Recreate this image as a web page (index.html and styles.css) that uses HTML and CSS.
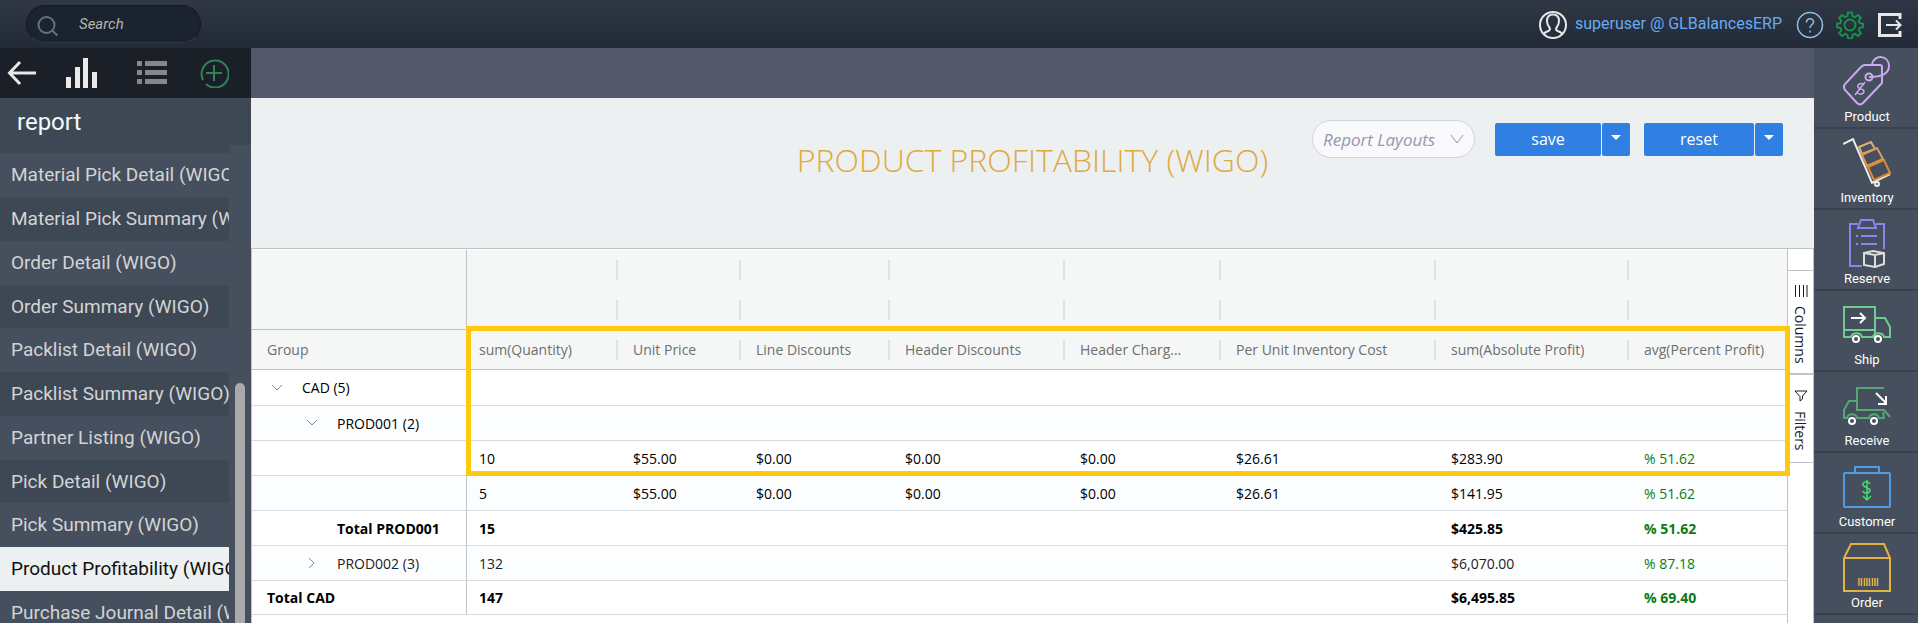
FILE: index.html
```
<!DOCTYPE html>
<html lang="en">
<head>
<meta charset="utf-8">
<title>Product Profitability (WIGO)</title>
<link rel="stylesheet" href="styles.css">
</head>
<body>
<div class="app">
  <header class="topbar">
    <label class="search">
      <svg class="search-icon" viewBox="0 0 22 22" width="22" height="22"><circle cx="9.500" cy="10" r="8"/><path d="M14.500 15l6 5.500"/></svg>
      <input type="text" placeholder="Search" aria-label="Search">
    </label>
    <div class="account">
      <svg class="ic avatar" viewBox="0 0 28 28" width="28" height="28"><circle cx="14" cy="14" r="13"/><path d="M5 23c1-3 6-2 6-5 0-2-3-3-3-8 0-4 2-6.500 6-6.500s6 2.500 6 6.500c0 5-3 6-3 8 0 3 5 2 6 5"/></svg>
      <a href="#">superuser @ GLBalancesERP</a>
      <button class="icon-btn" aria-label="Help"><svg class="ic help" viewBox="0 0 28 28" width="28" height="28"><circle cx="14" cy="14" r="12.500"/><path d="M10.500 11.500c0-5 7-5 7-.5 0 3-3.500 2.500-3.500 6M14 19.500v2"/></svg></button>
      <button class="icon-btn" aria-label="Settings"><svg class="ic gear" viewBox="0 0 28 28" width="28" height="28"><circle cx="14" cy="14" r="5.500"/><path d="M12 1.500h4l.6 3.600 2.400 1 3-2.100 2.800 2.800-2.100 3 1 2.400 3.300.6v3.400l-3.300.6-1 2.400 2.100 3-2.800 2.800-3-2.100-2.400 1-.6 3.600h-4l-.6-3.600-2.400-1-3 2.100-2.800-2.800 2.100-3-1-2.400-3.300-.6v-3.400l3.300-.6 1-2.400-2.100-3 2.800-2.800 3 2.100 2.400-1z"/></svg></button>
      <button class="icon-btn" aria-label="Log out"><svg class="ic logout" viewBox="0 0 28 28" width="28" height="28"><path d="M24 8V3.500H3.500v21H24V20"/><path class="arrow" d="M10 14h15M20 9.500l4.500 4.500-4.500 4.500"/></svg></button>
    </div>
  </header>

  <div class="body">
    <aside class="side">
      <div class="side-tools">
        <button class="icon-btn" aria-label="Back"><svg class="ic white3" viewBox="0 0 30 30" width="30" height="30"><path d="M29 15H3M13 4L2.500 15 13 26"/></svg></button>
        <button class="icon-btn" aria-label="Reports"><svg class="bars" viewBox="0 0 32 30" width="32" height="30"><path d="M0 19h5v11H0zM9 9h5v21H9zM17 0h5v30h-5zM26 14h5v16h-5z"/></svg></button>
        <button class="icon-btn" aria-label="List"><svg class="lines" viewBox="0 0 30 24" width="30" height="24"><path d="M0 0h5v5H0zM8 0h22v5H8zM0 9h5v5H0zM8 9h22v5H8zM0 18h5v5H0zM8 18h22v5H8z"/></svg></button>
        <button class="icon-btn" aria-label="Add"><svg class="ic plus" viewBox="0 0 30 30" width="30" height="30"><path d="M4 22A13.500 13.500 0 1 1 7 26"/><path d="M15 7v16M7 15h16"/></svg></button>
      </div>
      <h2>report</h2>
      <nav class="list-wrap">
        <ul class="list">
          <li><a href="#">Material Pick Detail (WIGO)</a></li>
          <li><a href="#">Material Pick Summary (WIGO)</a></li>
          <li><a href="#">Order Detail (WIGO)</a></li>
          <li><a href="#">Order Summary (WIGO)</a></li>
          <li><a href="#">Packlist Detail (WIGO)</a></li>
          <li><a href="#">Packlist Summary (WIGO)</a></li>
          <li><a href="#">Partner Listing (WIGO)</a></li>
          <li><a href="#">Pick Detail (WIGO)</a></li>
          <li><a href="#">Pick Summary (WIGO)</a></li>
          <li><a href="#" class="active">Product Profitability (WIGO)</a></li>
          <li><a href="#">Purchase Journal Detail (WIGO)</a></li>
        </ul>
        <div class="scroll"><div class="thumb"></div></div>
      </nav>
    </aside>

    <main class="main">
      <div class="strip"></div>
      <div class="head">
        <h1>PRODUCT PROFITABILITY (WIGO)</h1>
        <div class="actions">
          <div class="select-wrap">
            <select aria-label="Report Layouts"><option>Report Layouts</option></select>
            <svg class="chev" viewBox="0 0 14 10" width="14" height="10"><path d="M1 1l6 8 6-8"/></svg>
          </div>
          <div class="split save"><button>save</button><button class="drop" aria-label="More save options"><span class="caret"></span></button></div>
          <div class="split reset"><button>reset</button><button class="drop" aria-label="More reset options"><span class="caret"></span></button></div>
        </div>
      </div>
      <div class="grid">
        <div class="table-wrap">
          <table>
            <colgroup><col class="c0"><col class="c1"><col class="c2"><col class="c3"><col class="c4"><col class="c5"><col class="c6"><col class="c7"><col class="c8"></colgroup>
            <thead>
              <tr><td></td><td></td><td></td><td></td><td></td><td></td><td></td><td></td><td></td></tr>
              <tr class="line"><td></td><td></td><td></td><td></td><td></td><td></td><td></td><td></td><td></td></tr>
              <tr class="line"><th>Group</th><th>sum(Quantity)</th><th>Unit Price</th><th>Line Discounts</th><th>Header Discounts</th><th>Header Charg...</th><th>Per Unit Inventory Cost</th><th>sum(Absolute Profit)</th><th>avg(Percent Profit)</th></tr>
            </thead>
            <tbody>
              <tr><td><div class="group"><svg class="tog" viewBox="0 0 12 12" width="12" height="12"><path d="M1 3l5 5 5-5"/></svg>CAD (5)</div></td><td></td><td></td><td></td><td></td><td></td><td></td><td></td><td></td></tr>
              <tr><td><div class="group deep"><svg class="tog" viewBox="0 0 12 12" width="12" height="12"><path d="M1 3l5 5 5-5"/></svg>PROD001 (2)</div></td><td></td><td></td><td></td><td></td><td></td><td></td><td></td><td></td></tr>
              <tr><td></td><td>10</td><td>$55.00</td><td>$0.00</td><td>$0.00</td><td>$0.00</td><td>$26.61</td><td>$283.90</td><td>% 51.62</td></tr>
              <tr><td></td><td>5</td><td>$55.00</td><td>$0.00</td><td>$0.00</td><td>$0.00</td><td>$26.61</td><td>$141.95</td><td>% 51.62</td></tr>
              <tr class="total"><td><div class="leaf">Total PROD001</div></td><td>15</td><td></td><td></td><td></td><td></td><td></td><td>$425.85</td><td>% 51.62</td></tr>
              <tr class="soft"><td><div class="group deep"><svg class="tog" viewBox="0 0 12 12" width="12" height="12"><path d="M3 1l5 5-5 5"/></svg>PROD002 (3)</div></td><td>132</td><td></td><td></td><td></td><td></td><td></td><td>$6,070.00</td><td>% 87.18</td></tr>
              <tr class="total"><td>Total CAD</td><td>147</td><td></td><td></td><td></td><td></td><td></td><td>$6,495.85</td><td>% 69.40</td></tr>
            </tbody>
          </table>
          <div class="highlight"></div>
        </div>
        <div class="tabs">
          <button class="tab columns"><svg viewBox="0 0 14 12" width="14" height="12"><path d="M1.500 0v12M5.500 0v12M9.500 0v12M13 0v12"/></svg>Columns</button>
          <button class="tab filters"><svg viewBox="0 0 14 12" width="14" height="12"><path d="M1 1h12L8.500 6v3L6 11V6.500z"/></svg>Filters</button>
        </div>
      </div>
    </main>

    <nav class="dock">
      <a href="#"><svg viewBox="0 0 48 50" width="48" height="50" stroke="#cda9f2"><path d="M22 9h15q2 0 2 2v16L20 47q-3 3-6 0L2 34q-2-3 0-6L18 11q2-2 4-2z"/><circle cx="26" cy="21" r="3.500"/><path d="M26 21c12 0 20-3 20-11 0-11-15-12-17-2"/><path stroke-width="1.500" d="M21 29c-2-3-7-1-6 2 1 3 5 1 6 4 0 3-5 5-7 1M22 26L12 39"/></svg>Product</a>
      <a href="#"><svg viewBox="0 0 48 50" width="48" height="50" stroke="#d98b38"><path stroke="#eee" d="M0 7l10-5 19 44 18-9"/><circle stroke="#eee" cx="34" cy="47" r="2"/><path stroke="#e2ad78" d="M16 10l12-5 4 7-13 5z"/><path stroke="#dc9a56" d="M19 18l15-7 6 11-16 7z"/><path d="M25 30l16-7 6 13-16 7z"/></svg>Inventory</a>
      <a href="#"><svg viewBox="0 0 48 50" width="48" height="50" stroke="#8b84ee"><path d="M15 6H7v42h12M33 6h8v25M18 2h12l3 8H15zM13 18h2M18 18h16M13 26h2M18 26h16"/><path stroke="#ddd" d="M21 35l9-2 11 2v11l-9 3-11-2zM21 35l11 2 9-2M32 37v12"/></svg>Reserve</a>
      <a href="#"><svg viewBox="0 0 48 50" width="48" height="50" stroke="#6fcb90"><path d="M9 38H1V8h31v30H18M1 31h31M32 19h10l5 9v10h-7M30 38c1-5 10-5 11 0M8 38c1-5 10-5 11 0"/><g stroke="#fff" stroke-width="2"><circle cx="13" cy="40" r="3"/><circle cx="35" cy="40" r="3"/><path d="M8 19h14M17 14l5 5-5 5"/></g></svg>Ship</a>
      <a href="#"><svg viewBox="0 0 48 50" width="48" height="50" stroke="#55a873"><path d="M41 8H14v22h27l6 7M14 21H6l-5 9v8h4M4 38c1-5 9-5 10 0h12c1-5 9-5 10 0h5l-1-6"/><g stroke="#fff" stroke-width="2"><circle cx="9" cy="41" r="3"/><circle cx="31" cy="41" r="3"/><path d="M33 13l10 10M43 16v8h-8"/></g></svg>Receive</a>
      <a href="#"><svg viewBox="0 0 48 50" width="48" height="50" stroke="#4f9ce6"><rect x="1" y="12" width="46" height="34" rx="1"/><path d="M12 12V6h24v6"/><path stroke="#3fe26d" stroke-width="1.500" d="M27 23c-2-4-8-2-7 1 1 3 6 2 7 5 0 4-6 4-7 1M24 19v20M20 35l4 4 4-4"/></svg>Customer</a>
      <a href="#"><svg viewBox="0 0 48 50" width="48" height="50" stroke="#e3b245"><path d="M1 16v33h46V16L41 2H8zM1 16h46"/><path stroke-width="1.500" d="M16 36v8M18.500 36v8M21.500 36v8M24 36v8M26.500 36v8M29.500 36v8M32 36v8M34.500 36v8"/></svg>Order</a>
      <a href="#" aria-label="More"></a>
    </nav>
  </div>
</div>
</body>
</html>
```
FILE: styles.css
```
* { box-sizing: border-box; }
body { margin: 0; font-family: "Open Sans", "Noto Sans", sans-serif; font-size: 14px; color: #000; }
button { border: 0; padding: 0; background: none; font: inherit; color: inherit; }
a { text-decoration: none; color: inherit; }
svg { display: block; flex: none; fill: none; }

.app { height: 100vh; display: flex; flex-direction: column; overflow: hidden; }

.topbar { height: 48px; flex: none; display: flex; align-items: center; justify-content: space-between; padding: 0 14px 0 26px; background: linear-gradient(#303745, #232a37); font-family: Roboto, sans-serif; }
.search { display: flex; align-items: center; gap: 20px; width: 175px; height: 38px; padding: 4px 10px 0; border: 1px solid #151b26; border-bottom-color: #2f3744; border-radius: 19px; background: #1c2330; }
.search-icon { stroke: #5f7386; stroke-width: 2; }
.search input { min-width: 0; width: 100%; border: 0; outline: 0; background: none; padding: 0 0 4px; font: italic 15px Roboto, sans-serif; color: #b5b3ae; }
.search input::placeholder { color: #b5b3ae; opacity: 1; }
.account { display: flex; align-items: center; gap: 12px; padding-top: 2px; color: #69aaf5; font-size: 16px; }
.account a { margin: 0 2px 0 -4px; padding-bottom: 4px; }
.ic { stroke-width: 2; stroke: #e8e8e8; }
.help { stroke: #8dbfe6; stroke-width: 1.5; }
.gear { stroke: #15934a; }
.logout { stroke-width: 3; }
.logout .arrow { stroke-width: 2; }
.white3 { stroke-width: 3; }
.plus { stroke: #2f8457; }
.bars { fill: #ece8e6; }
.lines { fill: #85878c; }

.body { flex: 1; min-height: 0; display: flex; }

.side { width: 251px; flex: none; display: flex; flex-direction: column; background: #3e4754; font-family: Roboto, sans-serif; }
.side-tools { height: 50px; flex: none; display: grid; grid-template-columns: 59px 71px 62px auto; align-items: center; padding-left: 7px; background: #1a1f28; }
.side h2 { height: 47px; flex: none; margin: 0; padding: 0 17px; font-size: 24px; line-height: 48px; font-weight: 400; color: #f0faff; }
.list-wrap { flex: 1; min-height: 0; display: flex; overflow: hidden; background: #454f5d; }
.list { flex: 1; min-width: 0; margin: 0; padding: 8px 0 0; list-style: none; background: linear-gradient(#3e4754 8px, transparent 8px); }
.list a { display: block; height: 44px; padding-left: 11px; overflow: hidden; white-space: nowrap; font-size: 19px; line-height: 44px; color: #d3d4d5; border-radius: 3px; }
.list li:nth-child(4n) a { height: 43px; }
.list li:nth-child(even) a { background: #3e4754; }
.list li .active, .list li:nth-child(even) .active { background: #ecf0f1; color: #111; border-radius: 0; }
.scroll { width: 22px; padding: 238px 6px 0; }
.thumb { height: 100%; border-radius: 5px 5px 0 0; background: #a9a9a9; }

.main { flex: 1; min-width: 0; display: flex; flex-direction: column; background: #ecf0f1; }
.strip { height: 50px; flex: none; background: #52576a; }
.head { height: 150px; flex: none; display: grid; grid-template-columns: 1fr auto 1fr; align-items: start; padding: 22px 31px 0; }
.head h1 { grid-column: 2; margin: 17px 0 0; font-size: 32px; line-height: 46px; font-weight: 300; color: #dfa942; white-space: nowrap; }
.actions { justify-self: end; display: flex; align-items: center; }
.select-wrap { position: relative; width: 163px; margin-right: 20px; }
.select-wrap select { appearance: none; width: 100%; height: 38px; padding: 0 10px; border: 1px solid #cfd4d8; border-radius: 19px; background: #f9f9fc; font: italic 17px "Open Sans", sans-serif; color: #9498ac; }
.chev { position: absolute; right: 11px; top: 14px; stroke: #9498ac; }
.split { display: flex; gap: 1px; height: 33px; font-size: 16px; color: #fff; }
.split button { flex: 1; background: #3080e3; border-radius: 2px; }
.split .drop { flex: none; width: 28px; }
.save { width: 135px; margin-right: 14px; }
.reset { width: 139px; }
.caret { display: block; margin: 0 auto 4px; width: 10px; border: 5px solid transparent; border-bottom: 0; border-top-color: #fff; }

.grid { flex: 1; min-height: 0; display: flex; background: #fff; border: 1px solid #bdc3c7; border-bottom: 0; }
.table-wrap { position: relative; flex: 1; min-width: 0; padding-top: 1px; }
table { width: 100%; table-layout: fixed; border-collapse: separate; border-spacing: 0; }
.c0 { width: 215px; } .c1 { width: 151px; } .c2 { width: 123px; } .c3 { width: 149px; } .c4 { width: 175px; }
.c5 { width: 156px; } .c6 { width: 215px; } .c7 { width: 193px; }
th, td { padding: 0 0 0 15px; text-align: left; white-space: nowrap; border-bottom: 1px solid #d9dcde; }
td:first-child, th:first-child { border-right: 1px solid #bdc3c7; }
th:nth-child(2), td:nth-child(2) { padding-left: 12px; }
thead th, thead td { height: 40px; background: #f5f7f7 linear-gradient(#e0e1e4, #e0e1e4) no-repeat right center / 2px 20px; border-bottom: 0; font-weight: 500; color: #6d6e70; }
thead th:first-child, thead td:first-child, thead th:last-child, thead td:last-child { background-image: none; }
thead .line td:first-child, thead .line th { border-bottom: 1px solid #bdc3c7; }
tbody td { height: 35px; }
tbody tr:first-child td { height: 36px; }
tbody tr:last-child td { height: 34px; }
tbody tr:nth-child(even) td { background: #fcfdfe; }
tbody td:last-child { color: #0a7a16; }
.total { font-weight: 700; }
.soft { color: #222; }
.group { display: flex; align-items: center; gap: 19px; padding-left: 4px; }
.deep { padding-left: 39px; }
.leaf { padding-left: 70px; }
.tog { stroke: #7f8c8d; }
.highlight { position: absolute; top: 77px; left: 214px; right: -3px; height: 150px; border: 5px solid #fec90f; z-index: 1; }

.tabs { width: 26px; flex: none; display: flex; flex-direction: column; padding-top: 21px; border-left: 1px solid #bdc3c7; }
.tab { display: flex; align-items: center; writing-mode: vertical-rl; width: 25px; border-top: 1px solid #bdc3c7; font-size: 14px; color: #181d1f; }
.tab svg { stroke: #181d1f; }
.columns { height: 103px; gap: 9px; padding-top: 14px; }
.filters { height: 90px; gap: 9px; padding-top: 15px; border-top-width: 2px; border-bottom: 1px solid #bdc3c7; }

.dock { width: 104px; flex: none; background: #454f5d; color: #fff; font-family: Roboto, sans-serif; font-size: 13px; overflow: hidden; }
.dock a { display: flex; flex-direction: column; align-items: center; gap: 2px; height: 81px; padding: 8px 0 0 2px; line-height: 18px; border-bottom: 2px solid #38414d; }
.dock svg { stroke-width: 2; }
```
